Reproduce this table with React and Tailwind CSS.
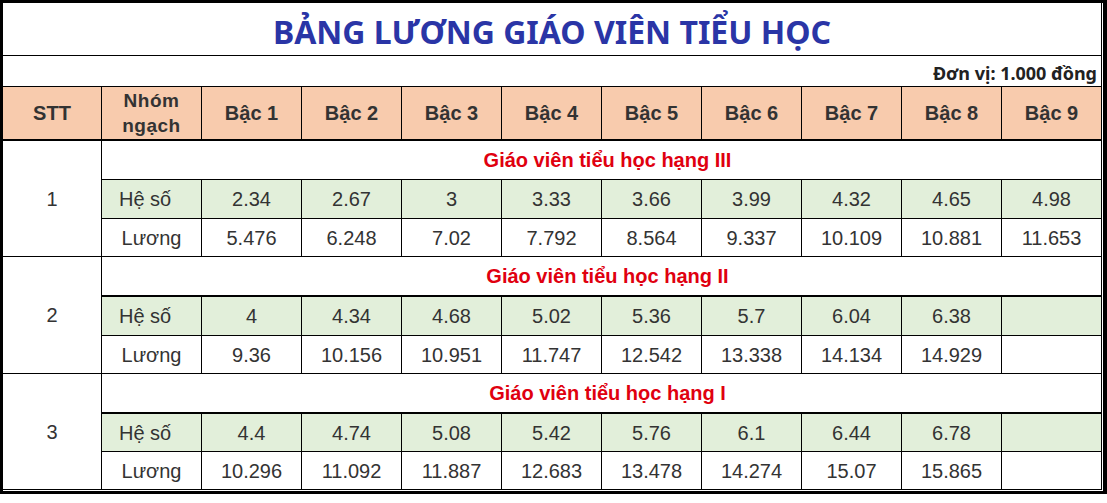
import React from "react";

const bacs = ["Bậc 1", "Bậc 2", "Bậc 3", "Bậc 4", "Bậc 5", "Bậc 6", "Bậc 7", "Bậc 8", "Bậc 9"];

const groups = [
  {
    stt: "1",
    title: "Giáo viên tiểu học hạng III",
    heSo: ["2.34", "2.67", "3", "3.33", "3.66", "3.99", "4.32", "4.65", "4.98"],
    luong: ["5.476", "6.248", "7.02", "7.792", "8.564", "9.337", "10.109", "10.881", "11.653"],
    titleBorder: "border-b",
  },
  {
    stt: "2",
    title: "Giáo viên tiểu học hạng II",
    heSo: ["4", "4.34", "4.68", "5.02", "5.36", "5.7", "6.04", "6.38", ""],
    luong: ["9.36", "10.156", "10.951", "11.747", "12.542", "13.338", "14.134", "14.929", ""],
    titleBorder: "border-b-2",
  },
  {
    stt: "3",
    title: "Giáo viên tiểu học hạng I",
    heSo: ["4.4", "4.74", "5.08", "5.42", "5.76", "6.1", "6.44", "6.78", ""],
    luong: ["10.296", "11.092", "11.887", "12.683", "13.478", "14.274", "15.07", "15.865", ""],
    titleBorder: "border-b-2",
  },
];

const arial = { fontFamily: '"Liberation Sans", Arial, sans-serif' };
const noto = { fontFamily: '"Noto Sans", "Open Sans", sans-serif' };

export default function App() {
  return (
    <div className="h-[503px] w-[1107px] bg-white">
      <div className="h-[494px] w-[1107px] border-b-[3px] border-l-[3px] border-r-[4px] border-t-[3px] border-black">
        <div
          className="grid w-[1099px] grid-cols-[99px_repeat(10,100px)] grid-rows-[53px_31px_54px_39px_39px_38px_40px_39px_38px_40px_38px_38px] text-[#333333]"
          style={arial}
        >
          {/* Title */}
          <div
            className="col-span-11 flex items-center justify-center border-b border-r border-black pt-[6px] text-[32px] font-bold leading-none text-[#2a35a6]"
            style={noto}
          >
            BẢNG LƯƠNG GIÁO VIÊN TIỂU HỌC
          </div>
          <div
            className="col-span-11 flex items-end justify-end border-b border-r border-black pb-[4px] pr-[4px] text-[18px] font-bold leading-none text-[#222222]"
            style={noto}
          >
            Đơn vị: 1.000 đồng
          </div>

          {/* Header */}
          <div className="flex items-center justify-center border-b-2 border-r border-black bg-[#f8cbad] text-[20px] font-bold">
            STT
          </div>
          <div className="flex items-center justify-center border-b-2 border-r border-black bg-[#f8cbad] text-center text-[19px] font-bold leading-[25px] tracking-[0.5px]">
            Nhóm
            <br />
            ngạch
          </div>
          {bacs.map((b) => (
            <div
              key={b}
              className="flex items-center justify-center border-b-2 border-r border-black bg-[#f8cbad] text-[20px] font-bold"
            >
              {b}
            </div>
          ))}

          {/* Groups */}
          {groups.map((g) => (
            <React.Fragment key={g.stt}>
              <div className="row-span-3 flex items-center justify-center border-b border-r border-black text-[20px]">
                {g.stt}
              </div>
              <div
                className={`col-span-10 flex items-center justify-center border-r border-black pl-[12px] text-[20px] font-bold text-[#e0000f] ${g.titleBorder}`}
              >
                {g.title}
              </div>
              <div className="flex items-center border-b border-r border-black bg-[#e2efda] pl-[17px] text-[20px]">
                Hệ số
              </div>
              {g.heSo.map((v, i) => (
                <div
                  key={i}
                  className="flex items-center justify-center border-b border-r border-black bg-[#e2efda] text-[20px]"
                >
                  {v}
                </div>
              ))}
              <div className="flex items-center justify-center border-b border-r border-black text-[20px]">
                Lương
              </div>
              {g.luong.map((v, i) => (
                <div
                  key={i}
                  className="flex items-center justify-center border-b border-r border-black text-[20px]"
                >
                  {v}
                </div>
              ))}
            </React.Fragment>
          ))}
        </div>
      </div>
    </div>
  );
}
